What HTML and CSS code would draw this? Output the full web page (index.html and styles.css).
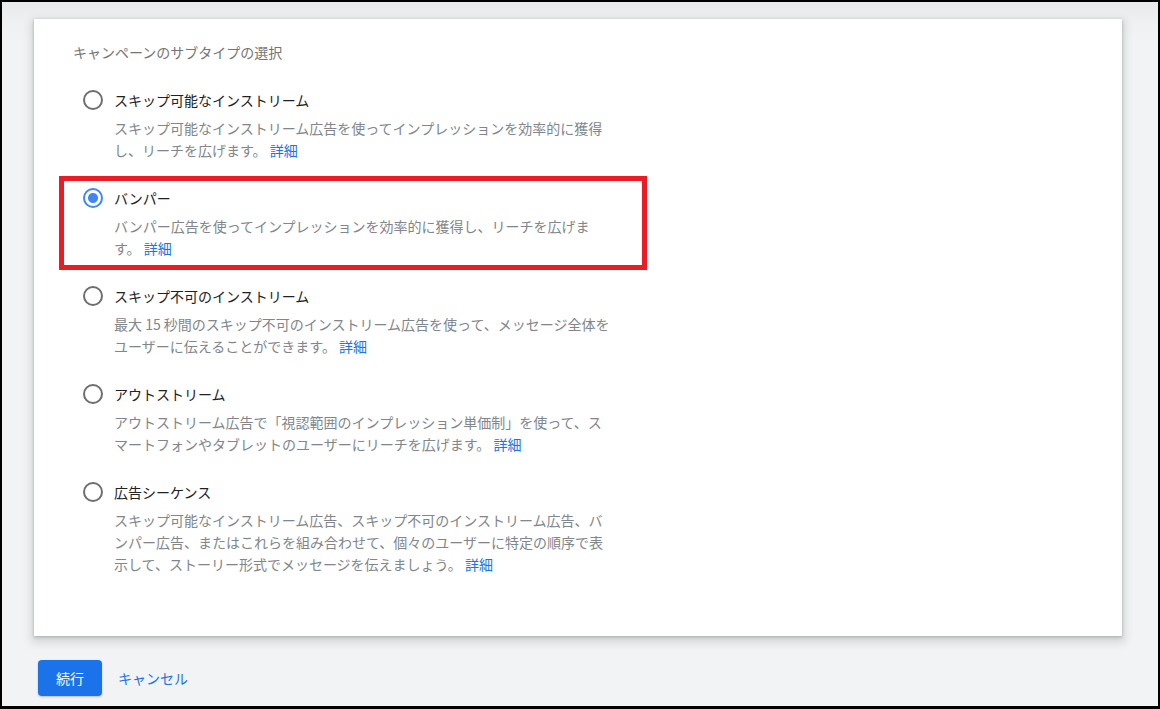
FILE: index.html
```html
<!DOCTYPE html>
<html lang="ja">
<head>
  <meta charset="UTF-8">
  <meta name="viewport" content="width=device-width, initial-scale=1.0">
  <title>キャンペーンのサブタイプの選択</title>
  <link rel="stylesheet" href="styles.css">
</head>
<body>
  <div class="ramec">
    <div class="karta">
      <div class="nadpis">キャンペーンのサブタイプの選択</div>

      <div class="volba">
        <div class="radek"><span class="radio"></span><span class="popisek">スキップ可能なインストリーム</span></div>
        <div class="text">スキップ可能なインストリーム広告を使ってインプレッションを効率的に獲得し、リーチを広げます。 <a class="odkaz">詳細</a></div>
      </div>

      <div class="volba vybrana">
        <div class="radek"><span class="radio zapnuto"></span><span class="popisek">バンパー</span></div>
        <div class="text">バンパー広告を使ってインプレッションを効率的に獲得し、リーチを広げます。 <a class="odkaz">詳細</a></div>
        <div class="zvyrazneni"></div>
      </div>

      <div class="volba">
        <div class="radek"><span class="radio"></span><span class="popisek">スキップ不可のインストリーム</span></div>
        <div class="text">最大 15 秒間のスキップ不可のインストリーム広告を使って、メッセージ全体をユーザーに伝えることができます。 <a class="odkaz">詳細</a></div>
      </div>

      <div class="volba">
        <div class="radek"><span class="radio"></span><span class="popisek">アウトストリーム</span></div>
        <div class="text">アウトストリーム広告で「視認範囲のインプレッション単価制」を使って、スマートフォンやタブレットのユーザーにリーチを広げます。 <a class="odkaz">詳細</a></div>
      </div>

      <div class="volba">
        <div class="radek"><span class="radio"></span><span class="popisek">広告シーケンス</span></div>
        <div class="text">スキップ可能なインストリーム広告、スキップ不可のインストリーム広告、バンパー広告、またはこれらを組み合わせて、個々のユーザーに特定の順序で表示して、ストーリー形式でメッセージを伝えましょう。 <a class="odkaz">詳細</a></div>
      </div>
    </div>

    <div class="tlacitka">
      <button class="pokracovat">続行</button>
      <a class="zrusit">キャンセル</a>
    </div>
  </div>
</body>
</html>
```

FILE: styles.css
```css
body {
  margin: 0;
  padding: 0;
  font-family: "Noto Sans CJK JP", "Noto Sans", sans-serif;
  background: #000;
}

.ramec {
  height: 709px;
  box-sizing: border-box;
  border: 2px solid #000;
  border-bottom-width: 3px;
  background: linear-gradient(#e8e9eb, #eef0f1 20px, #f1f3f4 40px);
  overflow: hidden;
}

.karta {
  margin: 17px 0 0 32px;
  width: 1088px;
  height: 617px;
  box-sizing: border-box;
  padding: 23px 0 0 39px;
  background: white;
  box-shadow: 0 1px 3px rgba(60, 64, 67, 0.3), 0 4px 8px 3px rgba(60, 64, 67, 0.15);
}

.nadpis {
  font-size: 14px;
  line-height: 20px;
  color: #757575;
  margin-bottom: 26px;
}

.volba {
  position: relative;
  margin-bottom: 25px;
}

.radek {
  display: flex;
  align-items: center;
  height: 24px;
}

.radio {
  width: 20px;
  height: 20px;
  box-sizing: border-box;
  border: 2px solid #6e6e6e;
  border-radius: 50%;
  margin-left: 10px;
  margin-right: 11px;
  flex-shrink: 0;
}

.radio.zapnuto {
  border-color: #4285f4;
  background: radial-gradient(circle, #4285f4 0, #4285f4 4.5px, white 5.5px);
}

.popisek {
  font-size: 14px;
  color: #202124;
}

.text {
  margin: 5px 0 0 41px;
  width: 500px;
  font-size: 14px;
  line-height: 22px;
  color: #80868b;
}

.odkaz {
  color: #1a73e8;
  cursor: pointer;
}

/* cervene oramovani kolem vybrane volby */
.zvyrazneni {
  position: absolute;
  top: -10px;
  left: -14px;
  width: 588px;
  height: 94px;
  box-sizing: border-box;
  border: 5px solid #ed1c24;
}

.tlacitka {
  display: flex;
  align-items: center;
  margin: 24px 0 0 36px;
}

.pokracovat {
  width: 64px;
  height: 36px;
  border: none;
  border-radius: 4px;
  background: #1a73e8;
  color: white;
  font-family: inherit;
  font-size: 14px;
  cursor: pointer;
  box-shadow: 0 1px 2px rgba(60, 64, 67, 0.3);
}

.zrusit {
  margin-left: 16px;
  font-size: 14px;
  color: #1a73e8;
  cursor: pointer;
}
```
